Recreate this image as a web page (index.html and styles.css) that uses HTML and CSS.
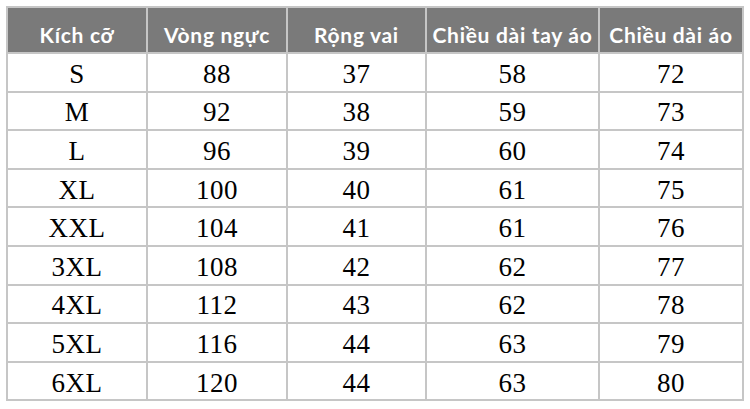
FILE: index.html
```html
<!DOCTYPE html>
<html lang="vi">
<head>
<meta charset="utf-8">
<link rel="stylesheet" href="styles.css">
</head>
<body>
<table class="size-table">
  <colgroup>
    <col class="c1"><col class="c2"><col class="c3"><col class="c4"><col class="c5">
  </colgroup>
  <thead>
    <tr><th>Kích cỡ</th><th>Vòng ngực</th><th>Rộng vai</th><th>Chiều dài tay áo</th><th>Chiều dài áo</th></tr>
  </thead>
  <tbody>
    <tr><td>S</td><td>88</td><td>37</td><td>58</td><td>72</td></tr>
    <tr><td>M</td><td>92</td><td>38</td><td>59</td><td>73</td></tr>
    <tr><td>L</td><td>96</td><td>39</td><td>60</td><td>74</td></tr>
    <tr><td>XL</td><td>100</td><td>40</td><td>61</td><td>75</td></tr>
    <tr><td>XXL</td><td>104</td><td>41</td><td>61</td><td>76</td></tr>
    <tr><td>3XL</td><td>108</td><td>42</td><td>62</td><td>77</td></tr>
    <tr><td>4XL</td><td>112</td><td>43</td><td>62</td><td>78</td></tr>
    <tr><td>5XL</td><td>116</td><td>44</td><td>63</td><td>79</td></tr>
    <tr><td>6XL</td><td>120</td><td>44</td><td>63</td><td>80</td></tr>
  </tbody>
</table>
</body>
</html>
```
FILE: styles.css
```css
html, body {
  margin: 0;
  padding: 0;
  background: #ffffff;
}
body {
  padding: 6px 0 0 6px;
}
.size-table {
  border-collapse: collapse;
  table-layout: fixed;
  width: 736px;
}
.c1 { width: 140px; }
.c2 { width: 140px; }
.c3 { width: 139px; }
.c4 { width: 173px; }
.c5 { width: 144px; }
.size-table thead tr { height: 46px; }
.size-table tbody tr { height: 38.6px; }
.size-table th,
.size-table td {
  border: 2px solid #c6c6c6;
  text-align: center;
  padding: 0;
  overflow: hidden;
  white-space: nowrap;
  vertical-align: middle;
}
.size-table th {
  background: #7a7a7a;
  color: #ffffff;
  font-family: "Lato", "Liberation Sans", sans-serif;
  font-weight: 700;
  font-size: 21px;
  letter-spacing: 0.7px;
  line-height: 26px;
  padding-top: 9px;
}
.size-table td {
  color: #000000;
  font-family: "Liberation Serif", "Times New Roman", serif;
  font-size: 27px;
  letter-spacing: 0.5px;
  line-height: 28px;
  padding-top: 3px;
}
```
